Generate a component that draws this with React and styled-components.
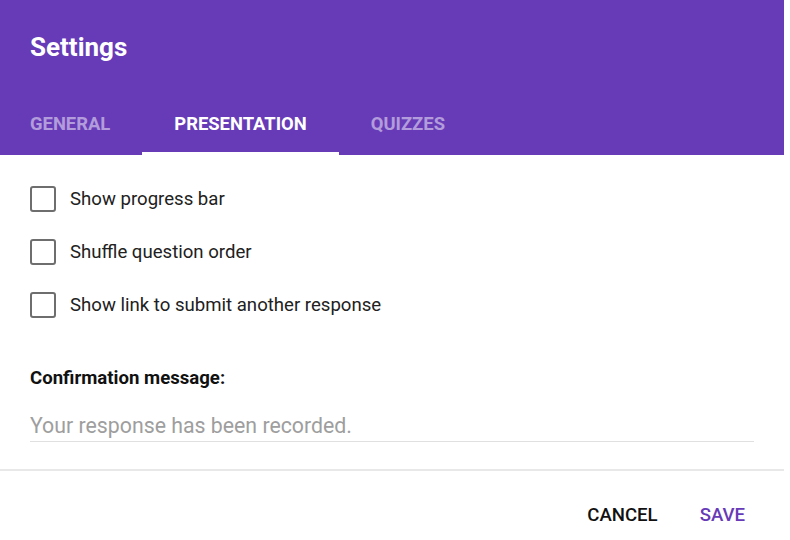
import React from 'react'
import styled, { createGlobalStyle } from 'styled-components'

const GlobalStyle = createGlobalStyle`
  body {
    margin: 0;
    background: #fff;
    font-family: Roboto, "Liberation Sans", Arial, sans-serif;
  }
`

const tabs = ['General', 'Presentation', 'Quizzes']

const options = [
  'Show progress bar',
  'Shuffle question order',
  'Show link to submit another response',
]

const App = () => {
  const active = 1
  return (
    <>
      <GlobalStyle />
      <Dialog>
        <Header>
          <Title>Settings</Title>
          <Tabs>
            {tabs.map((t, i) => (
              <Tab key={t} active={i === active}>{t}</Tab>
            ))}
          </Tabs>
        </Header>
        <Body>
          <Options>
            {options.map(o => (
              <Option key={o}>
                <Checkbox />
                <span>{o}</span>
              </Option>
            ))}
          </Options>
          <FieldLabel>Confirmation message:</FieldLabel>
          <Input placeholder="Your response has been recorded." />
        </Body>
        <Footer>
          <Button>Cancel</Button>
          <Button primary>Save</Button>
        </Footer>
      </Dialog>
    </>
  )
}

const Dialog = styled.div`
  width: 784px;
  display: flex;
  flex-direction: column;
`

const Header = styled.div`
  background: #673ab7;
  height: 155px;
  display: flex;
  flex-direction: column;
  justify-content: space-between;
  box-sizing: border-box;
  padding-top: 31px;
`

const Title = styled.div`
  color: #fff;
  font-size: 26px;
  font-weight: 700;
  padding-left: 30px;
  line-height: 32px;
`

const Tabs = styled.div`
  display: flex;
  margin-left: -2px;
`

const Tab = styled.div`
  height: 64px;
  padding: 0 32px;
  display: flex;
  align-items: center;
  box-sizing: border-box;
  padding-top: 3px;
  text-transform: uppercase;
  font-size: 18.4px;
  font-weight: 700;
  color: ${p => (p.active ? '#fff' : 'rgba(255,255,255,0.5)')};
  border-bottom: 3px solid ${p => (p.active ? '#fff' : 'transparent')};
`

const Body = styled.div`
  padding: 0 30px;
  display: flex;
  flex-direction: column;
`

const Options = styled.div`
  display: flex;
  flex-direction: column;
  gap: 27px;
  padding-top: 31px;
`

const Option = styled.label`
  display: flex;
  align-items: center;
  gap: 14px;
  font-size: 18.6px;
  line-height: 26px;
  color: #212121;
`

const Checkbox = styled.span`
  width: 26px;
  height: 26px;
  box-sizing: border-box;
  border: 2px solid #6e6e6e;
  border-radius: 3px;
`

const FieldLabel = styled.div`
  margin-top: 49px;
  font-size: 18.6px;
  line-height: 22px;
  font-weight: 700;
  color: #111;
`

const Input = styled.input`
  margin-top: 24px;
  border: none;
  border-bottom: 1px solid #e0e0e0;
  padding: 0 0 4px 0;
  font-family: inherit;
  font-size: 21.3px;
  line-height: 24px;
  height: 29px;
  box-sizing: border-box;
  width: 724px;
  outline: none;
  &::placeholder {
    color: #9e9e9e;
  }
`

const Footer = styled.div`
  margin-top: 27px;
  border-top: 2px solid #e8e8e8;
  display: flex;
  justify-content: flex-end;
  gap: 42px;
  padding: 33px 39px 0 0;
`

const Button = styled.div`
  text-transform: uppercase;
  font-size: 18.6px;
  line-height: 22px;
  font-weight: 500;
  color: ${p => (p.primary ? '#673ab7' : '#111')};
`

export default App
